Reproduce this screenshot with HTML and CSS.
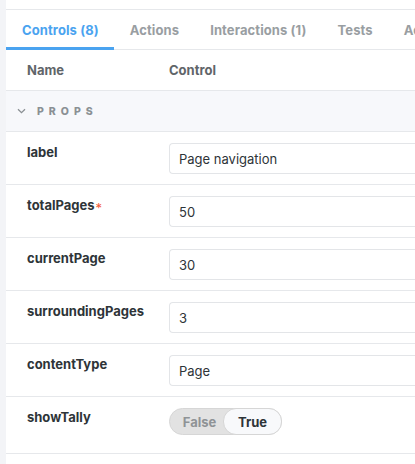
FILE: index.html
```html
<!DOCTYPE html>
<html>
<head>
<meta charset="utf-8">
<link rel="stylesheet" href="styles.css">
</head>
<body>
<div class="app">
  <div class="edge"></div>
  <div class="panel">
    <div class="topgap"></div>
    <div class="tabs">
      <div class="tab active">Controls (8)</div>
      <div class="tab">Actions</div>
      <div class="tab">Interactions (1)</div>
      <div class="tab">Tests</div>
      <div class="tab">Accessibility</div>
    </div>
    <div class="thead">
      <div class="c-name">Name</div>
      <div class="c-ctrl">Control</div>
    </div>
    <div class="section">
      <svg class="chev" width="9" height="6" viewBox="0 0 9 6"><path d="M1 1.3 L4.5 4.6 L8 1.3" fill="none" stroke="#8a9094" stroke-width="1.3"/></svg>
      <span>PROPS</span>
    </div>
    <div class="row">
      <div class="c-name"><span class="lbl">label</span></div>
      <div class="c-ctrl"><div class="input">Page navigation</div></div>
    </div>
    <div class="row">
      <div class="c-name"><span class="lbl">totalPages</span><span class="req">*</span></div>
      <div class="c-ctrl"><div class="input">50</div></div>
    </div>
    <div class="row">
      <div class="c-name"><span class="lbl">currentPage</span></div>
      <div class="c-ctrl"><div class="input">30</div></div>
    </div>
    <div class="row">
      <div class="c-name"><span class="lbl">surroundingPages</span></div>
      <div class="c-ctrl"><div class="input">3</div></div>
    </div>
    <div class="row">
      <div class="c-name"><span class="lbl">contentType</span></div>
      <div class="c-ctrl"><div class="input">Page</div></div>
    </div>
    <div class="row tall">
      <div class="c-name"><span class="lbl">showTally</span></div>
      <div class="c-ctrl">
        <div class="toggle"><span class="opt">False</span><span class="opt on">True</span></div>
      </div>
    </div>
  </div>
</div>
</body>
</html>
```

FILE: styles.css
```css
html, body { margin: 0; padding: 0; background: #fff; }
body { font-family: Inter, "Open Sans", sans-serif; font-size: 13px; color: #2e3438; overflow: hidden; }
.app { display: flex; width: 415px; height: 464px; }
.edge { width: 6px; flex: none; background: #f3f4f7; }
.panel { flex: 1; min-width: 0; overflow: hidden; }
.topgap { height: 9px; border-bottom: 1px solid #e6e8eb; }
.tabs { display: flex; height: 39px; border-bottom: 1px solid #e6e8eb; white-space: nowrap; }
.tab { padding: 0 15px 0 16px; display: flex; align-items: center; font-weight: 700; font-size: 13px; letter-spacing: 0.1px; color: #999ea2; flex: none; height: 40px; box-sizing: border-box; }
.tab.active { color: #4aa3f0; border-bottom: 3px solid #4aa3f0; padding-top: 3px; }
.thead { display: flex; height: 40px; align-items: center; border-bottom: 1px solid #e6e8eb; font-weight: 700; color: #5f6569; }
.c-name { width: 142px; padding-left: 21px; flex: none; }
.c-ctrl { flex: 1; min-width: 0; }
.section { height: 40px; background: #f7f8fb; border-bottom: 1px solid #e6e8eb; display: flex; align-items: center; padding-left: 11px; font-size: 10.5px; font-weight: 800; letter-spacing: 5px; color: #8a9094; }
.chev { margin-right: 11px; }
.row { display: flex; height: 52px; border-bottom: 1px solid #e6e8eb; align-items: flex-start; }
.row.tall { height: 56px; }
.row .c-name { padding-top: 12px; }
.lbl { font-weight: 700; color: #2e3438; }
.req { color: #f25a3a; font-weight: 400; font-size: 13px; margin-left: 1px; position: relative; top: 3px; }
.row .c-ctrl { padding-top: 11px; }
.input { height: 31px; box-sizing: border-box; border: 1px solid #e3e5e8; border-right: none; border-radius: 4px 0 0 4px; padding: 0 9px; display: flex; align-items: center; color: #2e3438; font-size: 13px; width: 300px; }
.toggle { display: inline-flex; align-items: center; height: 27px; box-sizing: border-box; width: 113px; background: #e2e2e2; border: 1px solid #d6d6d6; border-radius: 14px; }
.opt { flex: none; font-weight: 700; color: #8f9396; width: 53px; padding-left: 6px; box-sizing: border-box; height: 25px; display: flex; align-items: center; justify-content: center; }
.opt.on { background: #f8f9fb; color: #2e3438; border: 1px solid #d6d6d6; border-radius: 13px; margin-right: -1px; height: 27px; padding-left: 0; flex: 1; width: auto; }
```
